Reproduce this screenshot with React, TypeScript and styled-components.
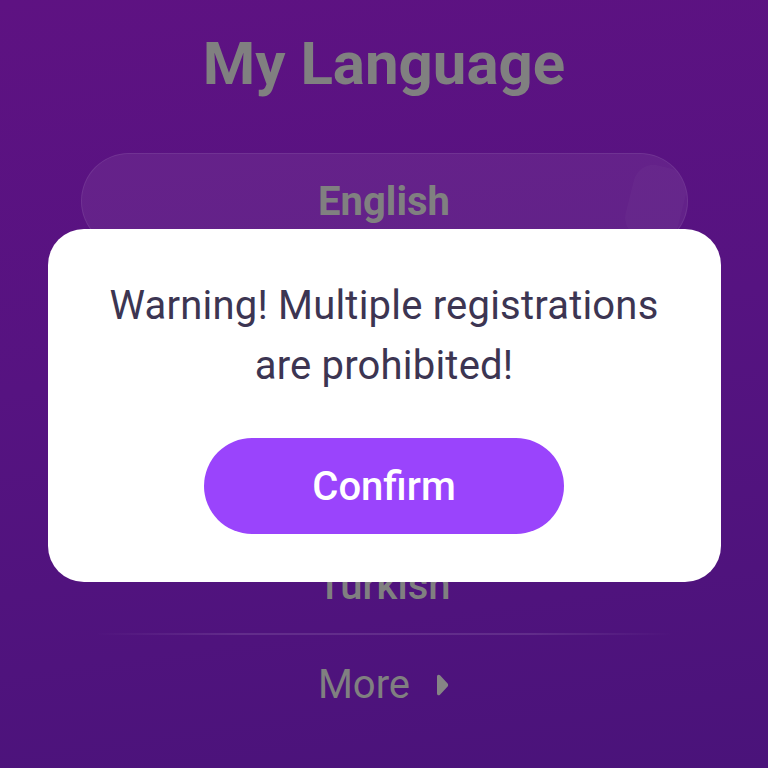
import React from "react";
import styled, { createGlobalStyle } from "styled-components";

const GlobalStyle = createGlobalStyle`
  html, body {
    margin: 0;
    padding: 0;
  }
  body {
    font-family: Roboto, "Noto Sans", "Liberation Sans", sans-serif;
    -webkit-font-smoothing: antialiased;
  }
  * { box-sizing: border-box; }
`;

const Page = styled.div`
  width: 768px;
  height: 768px;
  overflow: hidden;
  background: linear-gradient(172deg, #5e1282 0%, #561381 45%, #4a137a 100%);
  display: flex;
  flex-direction: column;
  align-items: center;
  padding-top: 28px;
`;

const Title = styled.h1`
  margin: 0;
  font-size: 60px;
  line-height: 72px;
  font-weight: 700;
  color: #808080;
`;

const List = styled.div`
  width: 607px;
  margin-top: 53px;
  display: flex;
  flex-direction: column;
  align-items: center;
`;

const LangRow = styled.div<{ $selected?: boolean }>`
  position: relative;
  width: 100%;
  height: 96px;
  display: flex;
  align-items: center;
  justify-content: center;
  font-size: 40px;
  font-weight: ${(p) => (p.$selected ? 700 : 500)};
  color: #808080;
  border-radius: 48px;
  background: ${(p) => (p.$selected ? "rgba(255,255,255,0.065)" : "transparent")};
  border: 1.5px solid ${(p) => (p.$selected ? "rgba(255,255,255,0.08)" : "transparent")};
  overflow: hidden;
`;

const Badge = styled.div`
  position: absolute;
  right: 4px;
  top: 12px;
  width: 54px;
  height: 74px;
  border-radius: 20px;
  transform: rotate(14deg);
  background: rgba(255, 255, 255, 0.022);
`;

const Divider = styled.div`
  width: 580px;
  height: 1.5px;
  background: linear-gradient(
    90deg,
    rgba(255, 255, 255, 0) 0%,
    rgba(255, 255, 255, 0.11) 25%,
    rgba(255, 255, 255, 0.11) 75%,
    rgba(255, 255, 255, 0) 100%
  );
`;

const MoreRow = styled.div`
  height: 100px;
  display: flex;
  align-items: center;
  justify-content: center;
  gap: 24px;
  font-size: 40px;
  font-weight: 400;
  color: #808080;
`;

const Backdrop = styled.div`
  position: fixed;
  inset: 0;
  display: flex;
  justify-content: center;
  align-items: flex-start;
  padding-top: 229px;
`;

const Dialog = styled.div`
  width: 673px;
  background: #ffffff;
  border-radius: 36px;
  padding: 47px 30px 48px;
  display: flex;
  flex-direction: column;
  align-items: center;
`;

const Message = styled.p`
  margin: 0;
  font-size: 40px;
  line-height: 60px;
  font-weight: 400;
  letter-spacing: 0.2px;
  color: #3c3552;
  text-align: center;
`;

const ConfirmButton = styled.button`
  margin-top: 42px;
  width: 360px;
  height: 96px;
  border: none;
  border-radius: 48px;
  background: #9a44fc;
  color: #ffffff;
  font-family: inherit;
  font-size: 40px;
  font-weight: 500;
  cursor: pointer;
`;

const Arrow = () => (
  <svg width="16" height="24" viewBox="0 0 16 24">
    <path
      d="M3 3.5 C3 1.8 4.6 1 6 2.2 L13.4 10.2 C14.4 11.2 14.4 12.8 13.4 13.8 L6 21.8 C4.6 23 3 22.2 3 20.5 Z"
      fill="#858585"
    />
  </svg>
);

const languages = ["English", "Español", "Português", "Indonesia", "Turkish"];

export default function App() {
  return (
    <>
      <GlobalStyle />
      <Page>
        <Title>My Language</Title>
        <List>
          {languages.map((lang, i) => (
            <LangRow key={lang} $selected={i === 0}>
              {lang}
              {i === 0 && <Badge />}
            </LangRow>
          ))}
          <Divider />
          <MoreRow>
            More
            <Arrow />
          </MoreRow>
        </List>
      </Page>
      <Backdrop>
        <Dialog>
          <Message>
            Warning! Multiple registrations
            <br />
            are prohibited!
          </Message>
          <ConfirmButton>Confirm</ConfirmButton>
        </Dialog>
      </Backdrop>
    </>
  );
}
